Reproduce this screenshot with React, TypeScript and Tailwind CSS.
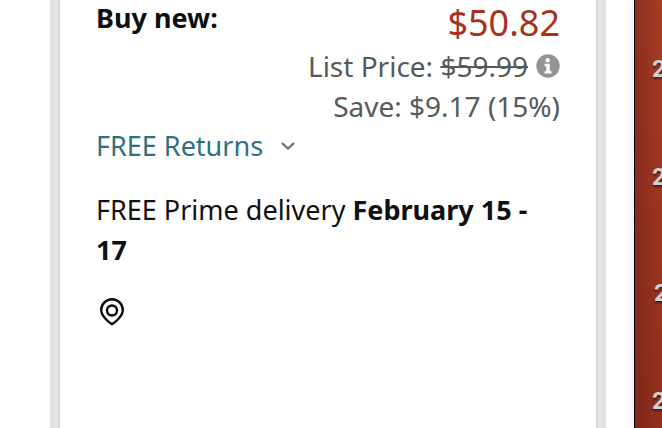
const railItems = [
  { id: 1, label: '2', indent: 'pl-[17px]' },
  { id: 2, label: '2', indent: 'pl-[17px]' },
  { id: 3, label: '2', indent: 'pt-2 pl-[19px]' },
  { id: 4, label: '2', indent: 'pl-[17px]' },
];

function InfoIcon() {
  return (
    <svg viewBox="0 0 24 24" className="h-6 w-6" aria-hidden="true">
      <circle cx="12" cy="12" r="11.7" fill="#949494" />
      <circle cx="11.6" cy="6.2" r="2.2" fill="#fff" />
      <path d="M8.6 9.8h5.2v7.4h1.8v2.3H8.6v-2.3h1.7v-5H8.6z" fill="#fff" />
    </svg>
  );
}

function ChevronIcon() {
  return (
    <svg viewBox="0 0 14 8" className="h-2 w-3.5" fill="none" aria-hidden="true">
      <path d="M1 1l6 5.6L13 1" stroke="#656565" strokeWidth="2" />
    </svg>
  );
}

function PinIcon() {
  return (
    <svg viewBox="0 0 24 28" className="h-7 w-6" fill="none" stroke="#0a0a0a" strokeWidth="2.4" aria-hidden="true">
      <path d="M12 26.2C10.2 25.2 1.2 18.8 1.2 12a10.8 10.8 0 0 1 21.6 0c0 6.8-9 13.2-10.8 14.2z" strokeLinejoin="round" />
      <circle cx="12" cy="12.5" r="5" />
    </svg>
  );
}

export default function App() {
  return (
    <div className="flex h-screen overflow-hidden bg-white pl-[50px] font-['Noto_Sans',sans-serif] text-[27px] leading-10 text-[#0f1111]">
      <main className="min-w-0 flex-1 border-x-8 border-[#e3e3e3]">
        <section className="h-full border-x-2 border-[#d5d9d9] px-9">
          <div className="flex items-start justify-between">
            <h2 className="-mt-0.5 font-bold">Buy new:</h2>
            <p className="text-[36px] leading-[46px] text-[#a9311a]">$50.82</p>
          </div>

          <div className="text-right text-[28px] text-[#565959]">
            <p className="flex items-center justify-end gap-2">
              <span>
                List Price: <s className="decoration-2">$59.99</s>
              </span>
              <button type="button" aria-label="List price details">
                <InfoIcon />
              </button>
            </p>
            <p>Save: $9.17 (15%)</p>
          </div>

          <a href="#returns" className="flex w-fit items-center gap-[18px] text-[#2f7080]">
            FREE Returns
            <ChevronIcon />
          </a>

          <p className="mt-6">
            FREE Prime delivery <strong className="font-bold">February 15 - 17</strong>
          </p>

          <button type="button" aria-label="Choose location" className="mt-7 ml-1 block">
            <PinIcon />
          </button>
        </section>
      </main>

      <aside className="ml-7 w-7 shrink-0 overflow-hidden border-l border-black bg-[linear-gradient(to_bottom,transparent,rgba(90,20,10,0.3)),linear-gradient(to_right,#8a301f,#a93d24)] pt-[53px] shadow-[-2px_0_8px_rgba(0,0,0,0.08)]">
        <ul className="flex flex-col gap-[76px] font-['Roboto',sans-serif] text-2xl font-bold text-[#d3d1d0] text-shadow-[0_2px_2px_rgba(0,0,0,0.5)]">
          {railItems.map((item) => (
            <li key={item.id} className={item.indent}>
              {item.label}
            </li>
          ))}
        </ul>
      </aside>
    </div>
  );
}
